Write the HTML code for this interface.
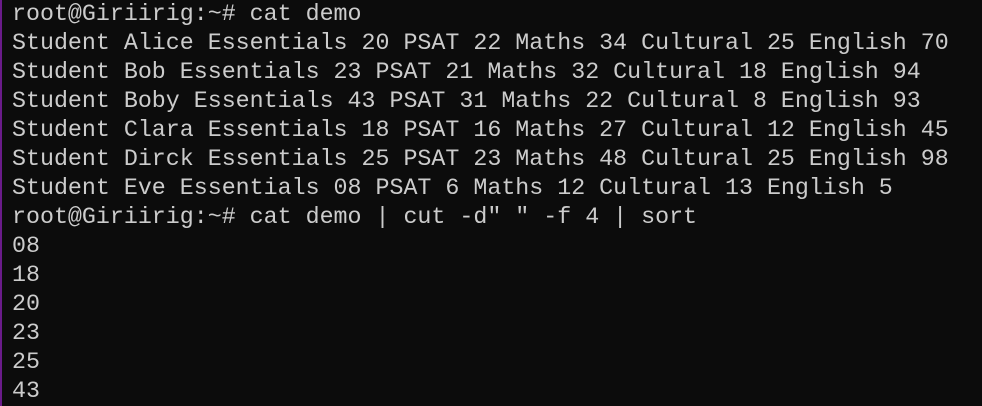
<!DOCTYPE html><html><head><style>
html,body{margin:0;padding:0;background:#0c0c0c;width:982px;height:406px;overflow:hidden}
.l{position:absolute;left:0;top:0;width:2px;height:406px;background:#6a1b8a}
pre{margin:0;position:absolute;left:12px;top:0;font-family:"Liberation Mono",monospace;font-size:23.3px;line-height:29px;color:#cccccc}
</style></head><body><div class="l"></div><pre>root@Giriirig:~# cat demo
Student Alice Essentials 20 PSAT 22 Maths 34 Cultural 25 English 70
Student Bob Essentials 23 PSAT 21 Maths 32 Cultural 18 English 94
Student Boby Essentials 43 PSAT 31 Maths 22 Cultural 8 English 93
Student Clara Essentials 18 PSAT 16 Maths 27 Cultural 12 English 45
Student Dirck Essentials 25 PSAT 23 Maths 48 Cultural 25 English 98
Student Eve Essentials 08 PSAT 6 Maths 12 Cultural 13 English 5
root@Giriirig:~# cat demo | cut -d" " -f 4 | sort
08
18
20
23
25
43</pre></body></html>
